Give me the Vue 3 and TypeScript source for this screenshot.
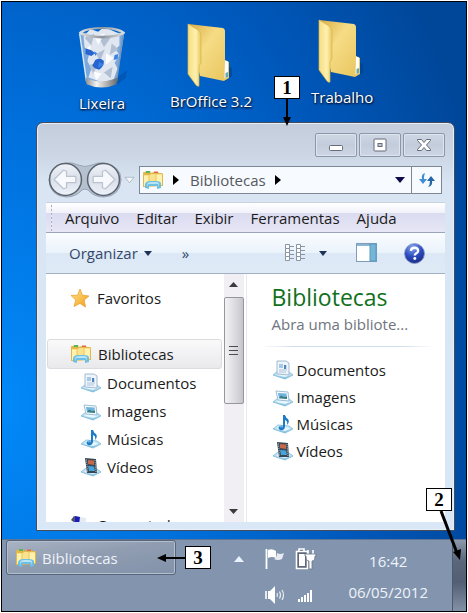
<script setup lang="ts">
interface LibraryItem {
  name: string
  icon: string
}

const menus: string[] = ['Arquivo', 'Editar', 'Exibir', 'Ferramentas', 'Ajuda']

const libraries: LibraryItem[] = [
  { name: 'Documentos', icon: '#ic-documents' },
  { name: 'Imagens', icon: '#ic-pictures' },
  { name: 'Músicas', icon: '#ic-music' },
  { name: 'Vídeos', icon: '#ic-videos' },
]
</script>

<template>
  <main class="screen">
    <svg class="sprite" aria-hidden="true">
      <defs>
        <linearGradient id="g-flap" x1="0" y1="0" x2="1" y2="0">
          <stop offset="0" stop-color="#f5dd82" />
          <stop offset="0.6" stop-color="#fff0ae" />
          <stop offset="1" stop-color="#e8c860" />
        </linearGradient>
        <linearGradient id="g-back" x1="0" y1="0" x2="1" y2="1">
          <stop offset="0" stop-color="#d9ac45" />
          <stop offset="0.4" stop-color="#f6dc86" />
          <stop offset="1" stop-color="#e7c55c" />
        </linearGradient>
        <linearGradient id="g-rim" x1="0" y1="0" x2="1" y2="0">
          <stop offset="0" stop-color="#e4e6e8" />
          <stop offset="0.5" stop-color="#8d949a" />
          <stop offset="1" stop-color="#dfe2e4" />
        </linearGradient>
        <linearGradient id="g-base" x1="0" y1="0" x2="1" y2="0">
          <stop offset="0" stop-color="#8b8f92" />
          <stop offset="0.35" stop-color="#f2f2f0" />
          <stop offset="0.7" stop-color="#a9aaa8" />
          <stop offset="1" stop-color="#5f686e" />
        </linearGradient>
        <linearGradient id="g-tray" x1="0" y1="0" x2="0" y2="1">
          <stop offset="0" stop-color="#e0f4fc" />
          <stop offset="1" stop-color="#7fbfe0" />
        </linearGradient>
        <radialGradient id="g-help" cx="0.4" cy="0.2" r="0.9">
          <stop offset="0" stop-color="#8aa6f0" />
          <stop offset="0.5" stop-color="#2c4cc0" />
          <stop offset="1" stop-color="#16267c" />
        </radialGradient>
        <linearGradient id="g-orb" x1="0" y1="0" x2="0" y2="1">
          <stop offset="0" stop-color="#f0f3f8" />
          <stop offset="0.5" stop-color="#d9dfe9" />
          <stop offset="1" stop-color="#eef3fa" />
        </linearGradient>
        <linearGradient id="g-star" x1="0" y1="0" x2="1" y2="1">
          <stop offset="0" stop-color="#ffe98a" />
          <stop offset="1" stop-color="#f29a1c" />
        </linearGradient>
      </defs>

      <symbol id="ic-folder" viewBox="0 0 50 66">
        <path d="M36 42 L46 46 L46 54 L38 60 Z" fill="#02397d" opacity="0.45" />
        <path d="M2 2 L37 6 Q39 7 39 9 L39 38 L43 40 L43 56 L38 59 L14 54 Z" fill="url(#g-back)" />
        <path d="M39 38.500 L42 39.500 L42 55 L38.500 56.500 Z" fill="#fff" />
        <path d="M39.500 51 L42 50 L42 55 L39.500 56 Z" fill="#6aa8b8" />
        <path d="M2 2 L12 8 Q15 10 15 15 L15 41 L13 44 L13 64 Q12 65 10 63 L2 52 Z" fill="url(#g-flap)" stroke="#d9b54c" stroke-width="0.700" />
      </symbol>

      <symbol id="ic-bin" viewBox="0 0 52 66">
        <path d="M40 54 L52 46 L50 54 L42 60 Z" fill="#02397d" opacity="0.35" />
        <path d="M3 7 L10 58 Q25 66 41 58 L49 7 Z" fill="#a5bfdf" opacity="0.75" />
        <path d="M7 11 L14 3 L22 6 L28 1 L37 5 L44 8 L44 20 L40 24 L44 30 L39 38 L42 44 L38 55 L26 58 L12 53 L15 44 L11 36 L13 28 L8 22 Z" fill="#e1e7f1" />
        <path d="M8 12 L18 8 L15 20 Z M22 10 L35 12 L28 22 Z M36 18 L43 24 L34 30 Z M13 40 L22 38 L17 50 Z M28 48 L37 42 L35 54 Z M20 29 L29 24 L24 36 Z" fill="#b2bfd3" />
        <path d="M18 10 L29 8 L22 19 Z M30 28 L38 33 L30 40 Z M17 47 L26 49 L20 56 Z M9 24 L14 20 L14 27 Z" fill="#fbfcff" />
        <path d="M9 23 L15 25 L19 28 L15 31 L9 29 Z M19 35 Q24 32 28 36 Q28 42 23 45 Q18 44 16 41 Z" fill="#2864cf" />
        <path d="M18 26 L21 28 L19 31 Z M23 37 L28 40 L22 43 Z M39 30 L43 29 L42 34 L38 35 Z" fill="#3983e6" />
        <path d="M3 8 L10 57" stroke="#dbe9f6" stroke-width="1.500" />
        <path d="M48 8 L41 57" stroke="#7595bc" stroke-width="1.500" />
        <path d="M9 53 Q25 61 42 53 L41 60 Q26 67 10 60 Z" fill="url(#g-base)" />
        <path d="M2 7 Q5 2 25 1 Q45 1 50 7 Q46 12 26 13 Q6 12 2 7 Z M6 7 Q14 10 26 10 Q39 10 46 7 Q39 3 26 3 Q11 3 6 7 Z" fill="url(#g-rim)" fill-rule="evenodd" />
      </symbol>

      <symbol id="ic-library" viewBox="0 0 22 20">
        <path d="M1 3 Q1 2 2 2 L3 2 L4 1 L8 1 L9 3 L12 2 L16 2 L17 3 L20 3 Q21 3 21 5 L21 16 L1 17 Z" fill="#e3b84a" />
        <path d="M4 1 L8 1 L8 3 L4 3 Z" fill="#59b55a" />
        <path d="M12 1.500 L16 1.500 L16 3 L12 3 Z" fill="#e36a48" />
        <path d="M2 5 L8 5 L9 4 L20 4 L20 15 L2 16 Z" fill="#fbe38b" />
        <path d="M2 6 L7 6 L7 15 L2 16 Z M14 5 L20 5 L20 15 L14 15 Z" fill="#fff1ae" />
        <path d="M7 5 V12 M14 4 V12" stroke="#e8c768" stroke-width="1" />
        <path d="M3 14 Q4 11 8 11 L14 11 Q18 11 19 13 L19 18 L15 19 L15 16 L7 16 L7 19 L3 18 Z" fill="#6fbfe4" />
        <path d="M5 14 Q6 12 9 12 L14 12 Q17 12 17 14 L17 17 L16 14 L6 14 L5 17 Z" fill="#b7e4f6" />
      </symbol>

      <symbol id="ic-tray" viewBox="0 0 22 20">
        <path d="M1 15 L6 11 L17 12 L21 15 L13 19 Z" fill="url(#g-tray)" stroke="#7eb9d8" stroke-width="0.800" />
        <path d="M4 15 L7 13 L16 13.500 L18 15 L13 17 Z" fill="#e8f7fd" />
      </symbol>
      <symbol id="ic-documents" viewBox="0 0 22 20">
        <use href="#ic-tray" />
        <path d="M5 1 L14 1 L17 3 L17 15 L5 14 Z" fill="#edf4fc" stroke="#9bb3cb" stroke-width="0.900" />
        <path d="M7 4 H11 V8 H7 Z" fill="#a8c8e8" />
        <path d="M12 6 H15 M12 8 H15 M7 10 H15 M7 12 H14" stroke="#a9bed6" stroke-width="0.900" />
        <path d="M12 5 H14 V9 H12 Z" fill="#4c86bd" />
      </symbol>
      <symbol id="ic-pictures" viewBox="0 0 22 20">
        <use href="#ic-tray" />
        <path d="M4 4 L16 5 L17 14 L6 13 Z" fill="#f5fbff" stroke="#93b5cf" stroke-width="0.900" />
        <path d="M6 6 L14.500 6.500 L15 12 L7 11.500 Z" fill="#6fb4de" />
        <path d="M7 11 L9 8.500 L12 10 L15 9.500 L15 12 Z" fill="#3d7f7c" />
      </symbol>
      <symbol id="ic-music" viewBox="0 0 22 20">
        <use href="#ic-tray" />
        <path d="M11 1 L13 1 Q14 4 16 5 Q18 8 15 11 Q16 7 13 6 L13 13 Q12 17 8 16 Q5 14 8 12 Q10 11 11 12 Z" fill="#1f7cc4" />
        <path d="M8 13 Q10 12 11 13" stroke="#8fd0f2" stroke-width="1" fill="none" />
      </symbol>
      <symbol id="ic-videos" viewBox="0 0 22 20">
        <use href="#ic-tray" />
        <path d="M5 1 L16 2 L17 16 L7 16 Z" fill="#3a4654" />
        <path d="M8 3 L14 3.500 L14 8 L8 7 Z" fill="#c4694a" />
        <path d="M8 9 L14 9.500 L15 14 L9 14 Z" fill="#46a4dc" />
        <path d="M6.500 2.500 L7.500 15 M15 3 L16 15" stroke="#c6d4e0" stroke-width="0.900" stroke-dasharray="1 1.200" />
      </symbol>
    </svg>

    <section class="desktop">
      <div class="shortcuts">
        <a href="#" class="shortcut bin">
          <svg class="bin-art"><use href="#ic-bin" /></svg>
          <span>Lixeira</span>
        </a>
        <a href="#" class="shortcut office">
          <svg class="folder-art"><use href="#ic-folder" /></svg>
          <span>BrOffice 3.2</span>
        </a>
        <a href="#" class="shortcut work">
          <svg class="folder-art"><use href="#ic-folder" /></svg>
          <span>Trabalho</span>
        </a>
      </div>

      <section class="window" aria-label="Bibliotecas">
        <header class="caption">
          <button type="button" aria-label="Minimizar">
            <svg viewBox="0 0 16 16"><rect x="1.500" y="8.500" width="13" height="5" rx="1" fill="#fff" stroke="#656b78" /></svg>
          </button>
          <button type="button" aria-label="Maximizar">
            <svg viewBox="0 0 16 16">
              <rect x="2" y="2" width="12" height="12" rx="1" fill="#fff" stroke="#656b78" />
              <rect x="6" y="6.500" width="4" height="3" fill="#c4cad6" stroke="#656b78" />
            </svg>
          </button>
          <button type="button" aria-label="Fechar">
            <svg viewBox="0 0 16 16"><path d="M1.500 2.500 H5.500 L8 5.500 L10.500 2.500 H14.500 V3.500 L10.500 8 L14.500 12.500 V13.500 H10.500 L8 10.500 L5.500 13.500 H1.500 V12.500 L5.500 8 L1.500 3.500 Z" fill="#fff" stroke="#656b78" stroke-linejoin="round" /></svg>
          </button>
        </header>

        <div class="navigation">
          <div class="travel">
            <svg class="travel-bed" viewBox="0 0 74 36" aria-hidden="true">
              <path d="M18 1 Q24 0 30 3 Q37 6 44 3 Q50 0 56 1 Q73 4 73 18 Q72 34 56 35 Q46 35 40 28 Q37 26 34 28 Q28 35 18 35 Q2 34 1 18 Q2 3 18 1 Z" fill="#b6c1d0" stroke="#98a4b5" />
            </svg>
            <button type="button" class="orb" aria-label="Voltar">
              <svg viewBox="0 0 34 34">
                <circle cx="17" cy="17" r="15.500" fill="url(#g-orb)" stroke="#5c6470" stroke-width="1.500" />
                <path d="M6 17 L15 8 L18 9 V14 H27 V20 H18 V25 L15 26 Z" fill="#f7f9fc" stroke="#bcc3d0" stroke-width="1.200" stroke-linejoin="round" />
              </svg>
            </button>
            <button type="button" class="orb" aria-label="Avançar">
              <svg viewBox="0 0 34 34">
                <circle cx="17" cy="17" r="15.500" fill="url(#g-orb)" stroke="#5c6470" stroke-width="1.500" />
                <path d="M28 17 L19 8 L16 9 V14 H7 V20 H16 V25 L19 26 Z" fill="#f7f9fc" stroke="#bcc3d0" stroke-width="1.200" stroke-linejoin="round" />
              </svg>
            </button>
            <button type="button" class="recent" aria-label="Páginas recentes">
              <svg viewBox="0 0 12 8"><path d="M1 1 H11 L6 7 Z" fill="#f3f6fa" stroke="#aeb7c4" /></svg>
            </button>
          </div>
          <div class="address">
            <svg class="library-art"><use href="#ic-library" /></svg>
            <svg class="crumb-arrow" viewBox="0 0 6 10"><path d="M0 0 L6 5 L0 10 Z" fill="#000" /></svg>
            <button type="button" class="crumb">Bibliotecas</button>
            <svg class="crumb-arrow" viewBox="0 0 6 10"><path d="M0 0 L6 5 L0 10 Z" fill="#000" /></svg>
            <button type="button" class="history" aria-label="Locais anteriores">
              <svg viewBox="0 0 10 6"><path d="M0 0 H10 L5 6 Z" fill="#0b0b4c" /></svg>
            </button>
            <button type="button" class="refresh" aria-label="Atualizar">
              <svg viewBox="0 0 18 16">
                <path d="M7 1 Q3 2 4 7 H1 L5 12 L9 7 H6 Q6 3 7 1 Z" fill="#3f8fd6" />
                <path d="M10 15 Q15 14 14 9 H17 L13 4 L9 9 H12 Q12 13 10 15 Z" fill="#2467a8" />
              </svg>
            </button>
          </div>
        </div>

        <nav class="menubar">
          <button v-for="menu in menus" :key="menu" type="button">{{ menu }}</button>
        </nav>

        <div class="toolbar">
          <button type="button" class="organize">
            Organizar
            <svg class="caret" viewBox="0 0 8 5"><path d="M0 0 H8 L4 5 Z" fill="#1e3358" /></svg>
          </button>
          <button type="button" class="more">»</button>
          <span class="stretch"></span>
          <button type="button" class="views" aria-label="Modo de exibição">
            <svg class="list-art" viewBox="0 0 22 18">
              <g fill="#fff" stroke="#8b96a4" stroke-width="1">
                <path d="M1.500 0.500 h4 v4 h-4 z M1.500 4.500 h4 v4 h-4 z M1.500 8.500 h4 v4 h-4 z M1.500 12.500 h4 v4 h-4 z M12.500 0.500 h4 v4 h-4 z M12.500 4.500 h4 v4 h-4 z M12.500 8.500 h4 v4 h-4 z M12.500 12.500 h4 v4 h-4 z" />
                <path d="M6 2.500 h4 M6 6.500 h4 M6 10.500 h4 M6 14.500 h4 M17 2.500 h4 M17 6.500 h4 M17 10.500 h4 M17 14.500 h4" />
              </g>
            </svg>
            <svg class="caret" viewBox="0 0 8 5"><path d="M0 0 H8 L4 5 Z" fill="#1e3358" /></svg>
          </button>
          <button type="button" class="preview" aria-label="Painel de visualização">
            <svg viewBox="0 0 22 20">
              <rect x="0.500" y="0.500" width="20" height="18" fill="#fff" stroke="#7e9dbb" />
              <rect x="1" y="1" width="19" height="2" fill="#8fb4d3" />
              <rect x="14" y="1" width="6" height="17" fill="#74b6d6" stroke="#5998be" />
            </svg>
          </button>
          <button type="button" class="help" aria-label="Ajuda">
            <svg viewBox="0 0 20 20">
              <circle cx="10" cy="10" r="9.500" fill="url(#g-help)" stroke="#8c9cc8" stroke-width="0.800" />
              <path d="M6.500 7.500 Q7 4.500 10 4.500 Q13.500 4.700 13.500 7.500 Q13.300 9.300 11.500 10 Q10.300 10.700 10.300 12" fill="none" stroke="#fff" stroke-width="2.200" />
              <circle cx="10.300" cy="14.800" r="1.400" fill="#fff" />
            </svg>
          </button>
        </div>

        <div class="panes">
          <aside class="tree">
            <a href="#" class="node root">
              <svg class="star-art" viewBox="0 0 20 20"><path d="M10 1 L12.500 7.200 L19 8 L14.200 12 L15.500 19 L10 15.400 L4 18.500 L5.800 12 L1 7.500 L7.600 7.200 Z" fill="url(#g-star)" stroke="#e8a233" stroke-width="0.800" /></svg>
              Favoritos
            </a>
            <a href="#" class="node root selected">
              <svg class="library-art"><use href="#ic-library" /></svg>
              Bibliotecas
            </a>
            <a v-for="item in libraries" :key="item.name" href="#" class="node child">
              <svg class="item-art"><use :href="item.icon" /></svg>
              {{ item.name }}
            </a>
            <a href="#" class="node root computer">
              <svg class="library-art" viewBox="0 0 22 20">
                <path d="M2 5 L5 1 L8 2 L6 8 Z" fill="#48515c" />
                <path d="M6 1 L17 3 L16 14 L5 11 Z" fill="#e4e9f2" />
                <path d="M6 1 L11 2 L10 10 L5 9 Z" fill="#1a1cb4" />
              </svg>
              Computador
            </a>
          </aside>

          <div class="scrollbar" aria-hidden="true">
            <svg class="step" viewBox="0 0 9 5"><path d="M0 5 L4.500 0 L9 5 Z" fill="#3b3b3b" /></svg>
            <div class="thumb"><i></i><i></i><i></i></div>
            <svg class="step down" viewBox="0 0 9 5"><path d="M0 0 H9 L4.500 5 Z" fill="#3b3b3b" /></svg>
          </div>

          <section class="content">
            <h1>Bibliotecas</h1>
            <p>Abra uma bibliote...</p>
            <hr />
            <ul>
              <li v-for="item in libraries" :key="item.name">
                <a href="#"><svg class="item-art"><use :href="item.icon" /></svg>{{ item.name }}</a>
              </li>
            </ul>
          </section>
        </div>
      </section>

      <footer class="taskbar">
        <button type="button" class="task">
          <svg class="library-art"><use href="#ic-library" /></svg>
          Bibliotecas
        </button>
        <div class="tray">
          <button type="button" class="expand" aria-label="Mostrar ícones ocultos">
            <svg viewBox="0 0 10 6"><path d="M0 6 L5 0 L10 6 Z" fill="#e9f3ff" /></svg>
          </button>
          <div class="status">
            <svg viewBox="0 0 22 22">
              <path d="M2.500 1 V21" stroke="#fff" stroke-width="1.800" />
              <path d="M4 2 Q8 0 12 3 V10 Q8 8 4 10 Z" fill="#fff" />
              <path d="M13 5 Q16 7 20 5 L18 11 Q14 13 10 11 Q13 10 13 5 Z" fill="#e8ecf2" />
            </svg>
            <svg viewBox="0 0 22 22">
              <path d="M4 3 V1 H9 V3 M1.500 3.500 H12.500 V20.500 H1.500 Z" fill="#5e6878" stroke="#fff" stroke-width="1.600" />
              <path d="M4 6 H10 V18 H4 Z" fill="#fff" />
              <path d="M13 2 V6 M18 2 V6" stroke="#fff" stroke-width="1.600" />
              <path d="M10 6 H21 V8 H20 Q20 13 17 13 V21 H14 V13 Q11 13 11 8 H10 Z" fill="#fff" stroke="#677489" stroke-width="0.800" />
            </svg>
            <svg viewBox="0 0 22 22">
              <path d="M2 7 V15" stroke="#fff" stroke-width="1.600" />
              <path d="M4 7 H6 L11 2 V20 L6 15 H4 Z" fill="#fff" />
              <path d="M13 9 Q14 11 13 13 M15.500 7.500 Q17.500 11 15.500 14.500 M18 6 Q21 11 18 16" fill="none" stroke="#e8ecf2" stroke-width="1.200" />
            </svg>
            <svg viewBox="0 0 22 22">
              <path d="M3 15 h2 v3 h-2 z M6 13 h2 v5 h-2 z M9 11 h2 v7 h-2 z M12 9 h2 v9 h-2 z M15 6 h2 v12 h-2 z" fill="#fff" />
            </svg>
          </div>
          <div class="clock">
            <time>16:42</time>
            <time>06/05/2012</time>
          </div>
        </div>
        <button type="button" class="show-desktop" aria-label="Mostrar área de trabalho"></button>
      </footer>

      <div class="callout first">
        <b>1</b>
        <svg class="down-arrow" viewBox="0 0 12 28"><path d="M6 0 V20" stroke="#000" stroke-width="2" /><path d="M2 18 H10 L6 27 Z" /></svg>
      </div>
      <div class="callout second">
        <b>2</b>
        <svg class="slant-arrow" viewBox="0 0 30 50"><path d="M6 0 L22 42" stroke="#000" stroke-width="3" /><path d="M18 41 L26 38 L25 49 Z" /></svg>
      </div>
      <div class="callout third">
        <svg class="left-arrow" viewBox="0 0 28 12"><path d="M8 6 H28" stroke="#000" stroke-width="2" /><path d="M9 2 V10 L0 6 Z" /></svg>
        <b>3</b>
      </div>
    </section>
  </main>
</template>

<style>
body {
  margin: 0;
  background: #fff;
}
</style>

<style scoped>
* {
  box-sizing: border-box;
}

.screen {
  display: flex;
  min-height: 100vh;
  padding: 1px;
  font-family: 'Open Sans', 'Noto Sans', sans-serif;
  font-size: 15px;
  line-height: 20px;
  color: #1b1b1b;
}

.sprite {
  position: absolute;
  width: 0;
  height: 0;
}

button {
  display: flex;
  align-items: center;
  justify-content: center;
  padding: 0;
  border: 0;
  background: none;
  color: inherit;
  font: inherit;
}

a {
  color: inherit;
  text-decoration: none;
}

svg {
  display: block;
  flex: none;
}

.desktop {
  position: relative;
  display: flex;
  flex: 1;
  flex-direction: column;
  min-width: 0;
  border: 1px solid #000;
  background: radial-gradient(ellipse 120% 130% at 0 66%, #0289f8 0%, #0070dc 35%, #0058bb 65%, #00479a 90%);
}

.shortcuts {
  position: relative;
  height: 120px;
}

.shortcut {
  position: absolute;
  display: flex;
  flex-direction: column;
  align-items: center;
  gap: 3px;
  color: #fff;
  text-shadow: 1px 1px 2px #001c40, 0 1px 2px #001c40;
}

.bin {
  top: 24px;
  left: 74px;
}

.office {
  top: 20px;
  left: 168px;
}

.work {
  top: 16px;
  left: 309px;
}

.bin-art {
  width: 52px;
  height: 64px;
}

.folder-art {
  width: 50px;
  height: 66px;
}

.window {
  display: flex;
  flex: 1;
  flex-direction: column;
  margin: 0 11px 8px 34px;
  padding: 10px 9px 8px;
  border: 1px solid #454c5c;
  border-radius: 7px 7px 0 0;
  background: linear-gradient(#c4cddc 0, #cbd5e4 30px, #d9e5f3 60px, #d9e7f6 100%);
  box-shadow: inset 0 0 0 1px #e6eef8;
}

.caption {
  display: flex;
  justify-content: flex-end;
  gap: 2px;
}

.caption button {
  width: 42px;
  height: 24px;
  border: 1px solid #8d97aa;
  border-radius: 2px;
  background: linear-gradient(#cfd7e4, #c2ccdb 50%, #ccd6e4);
  box-shadow: inset 0 0 0 1px #dde4ee;
}

.caption svg {
  width: 16px;
  height: 16px;
}

.navigation {
  display: flex;
  align-items: center;
  gap: 4px;
  margin: 5px 3px 5px 2px;
}

.travel {
  position: relative;
  display: flex;
  align-items: center;
  gap: 3px;
}

.travel-bed {
  position: absolute;
  left: 0;
  width: 74px;
  height: 36px;
}

.orb {
  position: relative;
}

.orb svg {
  width: 35px;
  height: 35px;
}

.recent svg {
  width: 11px;
  height: 8px;
}

.address {
  display: flex;
  flex: 1;
  align-items: center;
  height: 28px;
  padding-left: 2px;
  border: 1px solid #7e8795;
  background: #f7fafe;
  color: #55595e;
}

.library-art {
  width: 22px;
  height: 20px;
}

.crumb-arrow {
  width: 6px;
  height: 10px;
  margin: 0 11px 0 9px;
}

.history {
  width: 22px;
  height: 26px;
  margin-left: auto;
}

.history svg {
  width: 10px;
  height: 6px;
}

.refresh {
  width: 30px;
  height: 26px;
  border-left: 1px solid #7e8795;
}

.refresh svg {
  width: 18px;
  height: 16px;
}

.menubar {
  display: flex;
  gap: 17px;
  height: 31px;
  padding-left: 19px;
  border-top: 1px solid #c8d2e0;
  border-bottom: 1px solid #9ca4b8;
  background:
    repeating-linear-gradient(#aab0c4 0 2px, #eef0f8 2px 4px) 5px 2px / 1px 26px no-repeat,
    linear-gradient(#fff, #f1f2fa 34%, #dcdcf1 36%, #e6e6f6 100%);
}

.toolbar {
  display: flex;
  align-items: center;
  height: 41px;
  padding: 0 20px 0 23px;
  border-bottom: 1px solid #a3afc3;
  background: linear-gradient(#fafdff, #eaf2fb 49%, #dde8f6 50%, #dfeaf7 100%);
  color: #33496b;
}

.caret {
  width: 8px;
  height: 5px;
}

.organize {
  gap: 6px;
}

.more {
  margin-left: 30px;
}

.stretch {
  flex: 1;
}

.views {
  gap: 13px;
}

.list-art {
  width: 22px;
  height: 18px;
}

.preview {
  margin-left: 29px;
}

.preview svg {
  width: 22px;
  height: 20px;
}

.help {
  margin-left: 26px;
}

.help svg {
  width: 21px;
  height: 21px;
}

.panes {
  display: flex;
  flex: 1 1 240px;
  min-height: 0;
  overflow: hidden;
  background: #fff;
}

.tree {
  display: flex;
  flex: 1;
  flex-direction: column;
  min-width: 0;
  padding: 10px 2px 0 1px;
  overflow: hidden;
}

.node {
  display: flex;
  flex: none;
  align-items: center;
  height: 28px;
}

.root {
  gap: 6px;
  padding-left: 22px;
}

.child {
  gap: 5px;
  padding-left: 33px;
}

.selected {
  height: 30px;
  margin-top: 27px;
  border: 1px solid #dcdce0;
  border-radius: 3px;
  background: linear-gradient(#fafafb, #e9e9ec);
}

.computer {
  margin-top: 30px;
}

.star-art {
  width: 22px;
  height: 20px;
}

.item-art {
  width: 22px;
  height: 20px;
}

.scrollbar {
  display: flex;
  flex-direction: column;
  align-items: center;
  width: 20px;
  padding: 8px 0;
  background: #f1eff3;
}

.step {
  width: 9px;
  height: 5px;
}

.down {
  margin-top: auto;
}

.thumb {
  display: flex;
  flex-direction: column;
  align-items: center;
  justify-content: center;
  gap: 3px;
  width: 20px;
  height: 107px;
  margin-top: 10px;
  border: 1px solid #96979c;
  border-radius: 2px;
  background: linear-gradient(90deg, #f3f3f5, #dedee2 50%, #c5c5cc);
}

.thumb i {
  width: 9px;
  height: 1px;
  background: #4c4c50;
}

.content {
  width: 50%;
  margin-left: 2px;
  padding: 8px 10px 0 13px;
  border-left: 1px solid #e4e9f2;
}

.content h1 {
  margin: 0 0 0 12px;
  color: #10701c;
  font-size: 23px;
  font-weight: 400;
  line-height: 30px;
}

.content p {
  margin: 2px 0 0 12px;
  color: #70747e;
}

.content hr {
  height: 1px;
  margin: 12px 0 9px;
  border: 0;
  background: linear-gradient(90deg, #fff, #cfdcea 20%, #cfdcea 80%, #fff);
}

.content ul {
  margin: 0;
  padding: 0 0 0 12px;
  list-style: none;
}

.content li a {
  display: flex;
  align-items: center;
  gap: 3px;
  height: 27px;
}

.taskbar {
  display: flex;
  align-items: flex-start;
  height: 72px;
  padding-left: 4px;
  border-top: 1px solid #5f7596;
  background: #8395ae;
  color: #eef3fa;
}

.task {
  gap: 5px;
  justify-content: flex-start;
  width: 170px;
  height: 35px;
  padding-left: 8px;
  border: 1px solid #59657a;
  border-radius: 3px;
  background: linear-gradient(170deg, #a9b4c4, #909db1 45%, #8292aa);
  box-shadow: inset 0 0 0 1px #b3bfce;
}

.tray {
  display: flex;
  flex: 1;
  align-items: flex-start;
  justify-content: flex-end;
}

.expand {
  height: 38px;
}

.expand svg {
  width: 10px;
  height: 6px;
}

.status {
  display: grid;
  grid-template-columns: 22px 22px;
  gap: 14px 9px;
  margin: 8px 31px 0 20px;
}

.status svg {
  width: 22px;
  height: 22px;
}

.clock {
  display: flex;
  flex-direction: column;
  gap: 11px;
  align-items: center;
  margin: 11px 24px 0 0;
}

.show-desktop {
  align-self: stretch;
  width: 14px;
  border-left: 1px solid #4e596b;
  background: linear-gradient(#8c99ab, #5a6679 30%, #525f74 60%, #8492a8);
}

.callout {
  position: absolute;
  display: flex;
  color: #000;
  font-family: 'Liberation Serif', serif;
  font-size: 19px;
}

.callout b {
  display: flex;
  align-items: center;
  justify-content: center;
  width: 26px;
  height: 23px;
  border: 1px solid #000;
  background: #fff;
}

.first {
  top: 74px;
  left: 272px;
  flex-direction: column;
  align-items: center;
}

.second {
  right: 0;
  bottom: 50px;
  flex-direction: column;
  width: 40px;
}

.third {
  bottom: 42px;
  left: 155px;
  align-items: center;
}

.down-arrow {
  width: 12px;
  height: 28px;
}

.slant-arrow {
  width: 30px;
  height: 50px;
  margin-left: 9px;
}

.left-arrow {
  width: 28px;
  height: 12px;
}
</style>
